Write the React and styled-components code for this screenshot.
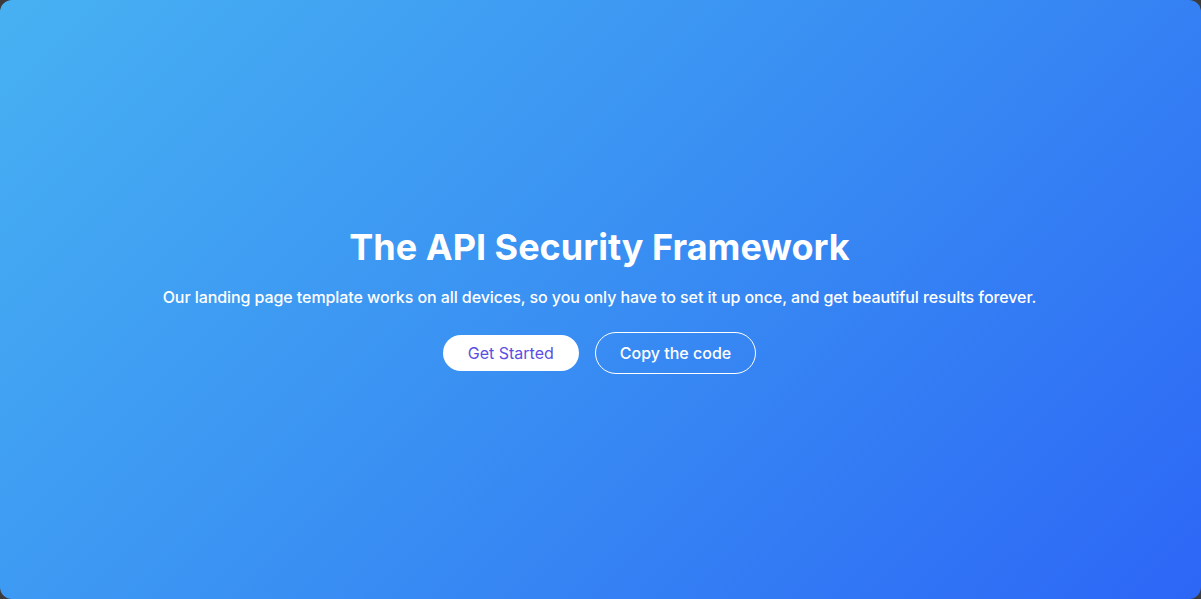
import React from "react"
import styled, { createGlobalStyle } from "styled-components"

const Global = createGlobalStyle`
  html, body { margin: 0; padding: 0; background: #3b3b3b; }
  body { font-family: Inter, "Noto Sans", sans-serif; }
  * { box-sizing: border-box; }
`

const Hero = styled.section`
  width: 1201px;
  height: 599px;
  padding: 2px 2px 0 0;
  border-radius: 12px;
  background: linear-gradient(135deg, #47b1f2 0%, #3a92f2 45%, #2c66f6 100%);
  display: flex;
  flex-direction: column;
  align-items: center;
  justify-content: center;
  color: #fff;
  text-align: center;
`

const Title = styled.h1`
  margin: 0;
  font-size: 36px;
  line-height: 40px;
  font-weight: 700;
`

const Lead = styled.p`
  margin: 18px 0 0;
  font-size: 16px;
  line-height: 24px;
  font-weight: 500;
  letter-spacing: -0.08px;
`

const Actions = styled.div`
  margin-top: 23px;
  display: flex;
  align-items: center;
  gap: 16px;
`

const Button = styled.button`
  font-family: inherit;
  font-size: 16px;
  border-radius: 999px;
  cursor: pointer;
  height: ${p => (p.$outline ? "42px" : "36px")};
  padding: 0 ${p => (p.$outline ? "24px" : "25px")};
  background: ${p => (p.$outline ? "transparent" : "#fff")};
  color: ${p => (p.$outline ? "#fff" : "#5b4fe3")};
  border: ${p => (p.$outline ? "1px solid #fff" : "none")};
  font-weight: ${p => (p.$outline ? 500 : 400)};
`

export default function App() {
  return (
    <>
      <Global />
      <Hero>
        <Title>The API Security Framework</Title>
        <Lead>
          Our landing page template works on all devices, so you only have to set it up once, and get beautiful results forever.
        </Lead>
        <Actions>
          <Button>Get Started</Button>
          <Button $outline>Copy the code</Button>
        </Actions>
      </Hero>
    </>
  )
}
